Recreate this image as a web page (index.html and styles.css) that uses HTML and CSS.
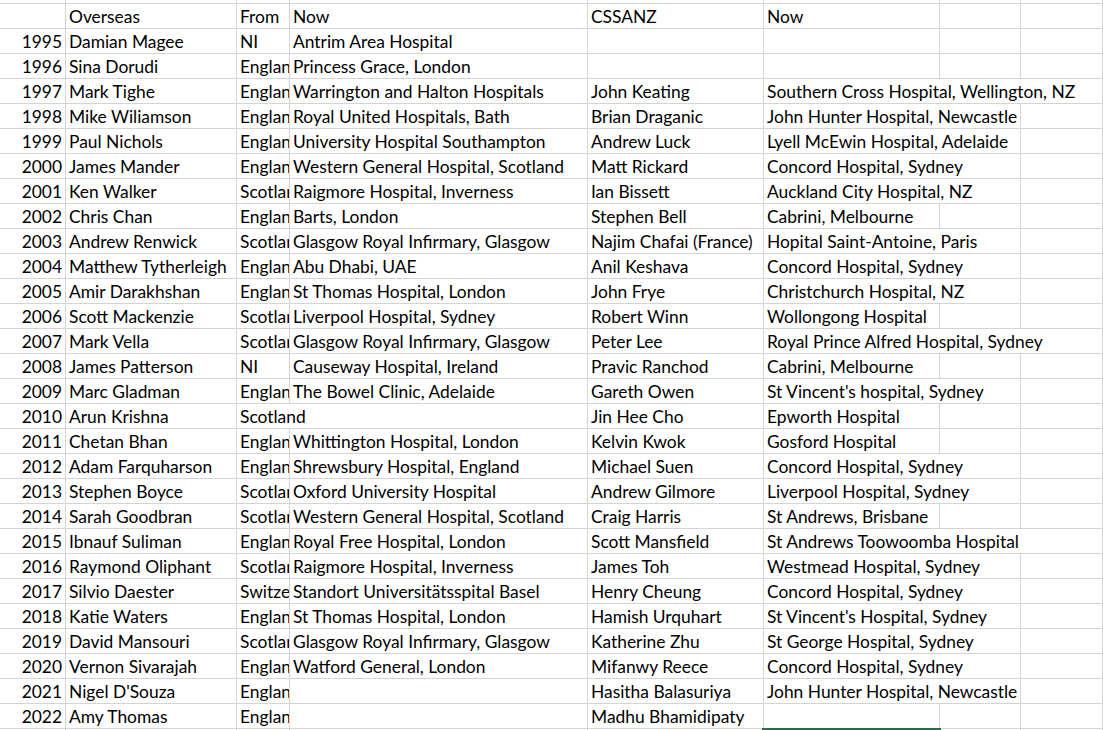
FILE: index.html
```html
<!DOCTYPE html>
<html>
<head>
<meta charset="utf-8">
<link rel="stylesheet" href="styles.css">
</head>
<body>
<div class="sheet">
  <div class="row top"><div class="c"></div><div class="c"></div><div class="c"></div><div class="c"></div><div class="c"></div><div class="c"></div><div class="c"></div><div class="c"></div></div>
  <div class="row"><div class="c num"></div><div class="c">Overseas</div><div class="c">From</div><div class="c">Now</div><div class="c">CSSANZ</div><div class="c">Now</div><div class="c"></div><div class="c"></div></div>
  <div class="row"><div class="c num">1995</div><div class="c">Damian Magee</div><div class="c">NI</div><div class="c">Antrim Area Hospital</div><div class="c"></div><div class="c"></div><div class="c"></div><div class="c"></div></div>
  <div class="row"><div class="c num">1996</div><div class="c">Sina Dorudi</div><div class="c">England</div><div class="c">Princess Grace, London</div><div class="c"></div><div class="c"></div><div class="c"></div><div class="c"></div></div>
  <div class="row"><div class="c num">1997</div><div class="c">Mark Tighe</div><div class="c">England</div><div class="c">Warrington and Halton Hospitals</div><div class="c">John Keating</div><div class="c span3">Southern Cross Hospital, Wellington, NZ</div></div>
  <div class="row"><div class="c num">1998</div><div class="c">Mike Wiliamson</div><div class="c">England</div><div class="c">Royal United Hospitals, Bath</div><div class="c">Brian Draganic</div><div class="c span2">John Hunter Hospital, Newcastle</div><div class="c"></div></div>
  <div class="row"><div class="c num">1999</div><div class="c">Paul Nichols</div><div class="c">England</div><div class="c">University Hospital Southampton</div><div class="c">Andrew Luck</div><div class="c span2">Lyell McEwin Hospital, Adelaide</div><div class="c"></div></div>
  <div class="row"><div class="c num">2000</div><div class="c">James Mander</div><div class="c">England</div><div class="c">Western General Hospital, Scotland</div><div class="c">Matt Rickard</div><div class="c span2">Concord Hospital, Sydney</div><div class="c"></div></div>
  <div class="row"><div class="c num">2001</div><div class="c">Ken Walker</div><div class="c">Scotland</div><div class="c">Raigmore Hospital, Inverness</div><div class="c">Ian Bissett</div><div class="c span2">Auckland City Hospital, NZ</div><div class="c"></div></div>
  <div class="row"><div class="c num">2002</div><div class="c">Chris Chan</div><div class="c">England</div><div class="c">Barts, London</div><div class="c">Stephen Bell</div><div class="c">Cabrini, Melbourne</div><div class="c"></div><div class="c"></div></div>
  <div class="row"><div class="c num">2003</div><div class="c">Andrew Renwick</div><div class="c">Scotland</div><div class="c">Glasgow Royal Infirmary, Glasgow</div><div class="c">Najim Chafai (France)</div><div class="c span2">Hopital Saint-Antoine, Paris</div><div class="c"></div></div>
  <div class="row"><div class="c num">2004</div><div class="c">Matthew Tytherleigh</div><div class="c">England</div><div class="c">Abu Dhabi, UAE</div><div class="c">Anil Keshava</div><div class="c span2">Concord Hospital, Sydney</div><div class="c"></div></div>
  <div class="row"><div class="c num">2005</div><div class="c">Amir Darakhshan</div><div class="c">England</div><div class="c">St Thomas Hospital, London</div><div class="c">John Frye</div><div class="c span2">Christchurch Hospital, NZ</div><div class="c"></div></div>
  <div class="row"><div class="c num">2006</div><div class="c">Scott Mackenzie</div><div class="c">Scotland</div><div class="c">Liverpool Hospital, Sydney</div><div class="c">Robert Winn</div><div class="c">Wollongong Hospital</div><div class="c"></div><div class="c"></div></div>
  <div class="row"><div class="c num">2007</div><div class="c">Mark Vella</div><div class="c">Scotland</div><div class="c">Glasgow Royal Infirmary, Glasgow</div><div class="c">Peter Lee</div><div class="c span3">Royal Prince Alfred Hospital, Sydney</div></div>
  <div class="row"><div class="c num">2008</div><div class="c">James Patterson</div><div class="c">NI</div><div class="c">Causeway Hospital, Ireland</div><div class="c">Pravic Ranchod</div><div class="c">Cabrini, Melbourne</div><div class="c"></div><div class="c"></div></div>
  <div class="row"><div class="c num">2009</div><div class="c">Marc Gladman</div><div class="c">England</div><div class="c">The Bowel Clinic, Adelaide</div><div class="c">Gareth Owen</div><div class="c span2">St Vincent's hospital, Sydney</div><div class="c"></div></div>
  <div class="row"><div class="c num">2010</div><div class="c">Arun Krishna</div><div class="c span2">Scotland</div><div class="c">Jin Hee Cho</div><div class="c">Epworth Hospital</div><div class="c"></div><div class="c"></div></div>
  <div class="row"><div class="c num">2011</div><div class="c">Chetan Bhan</div><div class="c">England</div><div class="c">Whittington Hospital, London</div><div class="c">Kelvin Kwok</div><div class="c">Gosford Hospital</div><div class="c"></div><div class="c"></div></div>
  <div class="row"><div class="c num">2012</div><div class="c">Adam Farquharson</div><div class="c">England</div><div class="c">Shrewsbury Hospital, England</div><div class="c">Michael Suen</div><div class="c span2">Concord Hospital, Sydney</div><div class="c"></div></div>
  <div class="row"><div class="c num">2013</div><div class="c">Stephen Boyce</div><div class="c">Scotland</div><div class="c">Oxford University Hospital</div><div class="c">Andrew Gilmore</div><div class="c span2">Liverpool Hospital, Sydney</div><div class="c"></div></div>
  <div class="row"><div class="c num">2014</div><div class="c">Sarah Goodbran</div><div class="c">Scotland</div><div class="c">Western General Hospital, Scotland</div><div class="c">Craig Harris</div><div class="c">St Andrews, Brisbane</div><div class="c"></div><div class="c"></div></div>
  <div class="row"><div class="c num">2015</div><div class="c">Ibnauf Suliman</div><div class="c">England</div><div class="c">Royal Free Hospital, London</div><div class="c">Scott Mansfield</div><div class="c span3">St Andrews Toowoomba Hospital</div></div>
  <div class="row"><div class="c num">2016</div><div class="c">Raymond Oliphant</div><div class="c">Scotland</div><div class="c">Raigmore Hospital, Inverness</div><div class="c">James Toh</div><div class="c span2">Westmead Hospital, Sydney</div><div class="c"></div></div>
  <div class="row"><div class="c num">2017</div><div class="c">Silvio Daester</div><div class="c">Switzerland</div><div class="c">Standort Universitätsspital Basel</div><div class="c">Henry Cheung</div><div class="c span2">Concord Hospital, Sydney</div><div class="c"></div></div>
  <div class="row"><div class="c num">2018</div><div class="c">Katie Waters</div><div class="c">England</div><div class="c">St Thomas Hospital, London</div><div class="c">Hamish Urquhart</div><div class="c span2">St Vincent's Hospital, Sydney</div><div class="c"></div></div>
  <div class="row"><div class="c num">2019</div><div class="c">David Mansouri</div><div class="c">Scotland</div><div class="c">Glasgow Royal Infirmary, Glasgow</div><div class="c">Katherine Zhu</div><div class="c span2">St George Hospital, Sydney</div><div class="c"></div></div>
  <div class="row"><div class="c num">2020</div><div class="c">Vernon Sivarajah</div><div class="c">England</div><div class="c">Watford General, London</div><div class="c">Mifanwy Reece</div><div class="c span2">Concord Hospital, Sydney</div><div class="c"></div></div>
  <div class="row"><div class="c num">2021</div><div class="c">Nigel D'Souza</div><div class="c">England</div><div class="c"></div><div class="c">Hasitha Balasuriya</div><div class="c span2">John Hunter Hospital, Newcastle</div><div class="c"></div></div>
  <div class="row"><div class="c num">2022</div><div class="c">Amy Thomas</div><div class="c">England</div><div class="c"></div><div class="c">Madhu Bhamidipaty</div><div class="c"></div><div class="c"></div><div class="c"></div></div>
  <div class="row"><div class="c num"></div><div class="c"></div><div class="c"></div><div class="c"></div><div class="c"></div><div class="c sel"></div><div class="c"></div><div class="c"></div></div>
</div>
</body>
</html>
```

FILE: styles.css
```css
html, body {
  margin: 0;
  padding: 0;
  background: #ffffff;
  overflow: hidden;
}

.sheet {
  width: 1103px;
  font-family: "Lato", "Liberation Sans", sans-serif;
  font-size: 17.4px;
  color: #000000;
}

.row {
  display: grid;
  grid-template-columns: 66px 171px 53px 298px 176px 176px 81px 1fr;
  height: 25px;
}

.row.top {
  height: 4px;
}

.c {
  box-sizing: border-box;
  border-right: 1px solid #d4d4d4;
  border-bottom: 1px solid #d4d4d4;
  padding: 1px 3px 0 3px;
  line-height: 24px;
  white-space: nowrap;
  overflow: hidden;
  position: relative;
}

.c.num {
  text-align: right;
  padding-right: 3px;
}

.c.span2 {
  grid-column: span 2;
}

.c.span3 {
  grid-column: span 3;
}

.c.sel {
  overflow: visible;
}

.c.sel::after {
  content: "";
  position: absolute;
  left: -2px;
  top: -1px;
  width: 179px;
  height: 26px;
  box-sizing: border-box;
  border: 2px solid #217346;
}
```
